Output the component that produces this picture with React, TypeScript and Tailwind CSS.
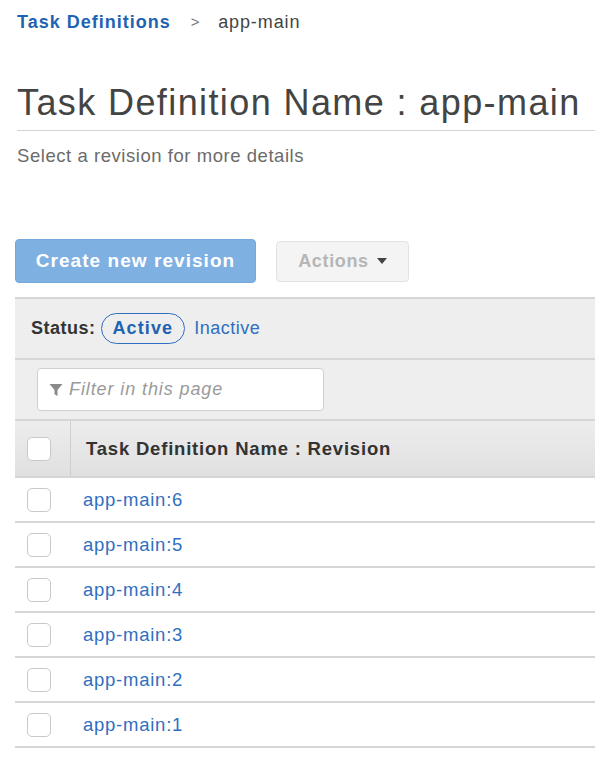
const revisions = [6, 5, 4, 3, 2, 1];

function Checkbox() {
  return <div className="h-[24px] w-[24px] rounded-[5px] border-[1.5px] border-[#c9c9c9] bg-white" />;
}

export default function App() {
  return (
    <div className="min-h-[772px] w-[595px] overflow-hidden bg-white font-['Liberation_Sans',Arial,sans-serif] tracking-[0.65px] text-[#444]">
      <nav className="flex items-center pl-[17px] pt-[10px] text-[18px] leading-[24px]">
        <span className="font-bold tracking-[1px] text-[#1f63b3]">Task Definitions</span>
        <span className="ml-[20px] text-[15px] text-[#777]">&gt;</span>
        <span className="ml-[18px] tracking-[0.9px] text-[#444]">app-main</span>
      </nav>

      <h1 className="ml-[17px] mt-[47px] border-b border-[#d3d3d3] pb-[5px] text-[36px] leading-[44px] font-normal tracking-[1.4px] text-[#444]">
        Task Definition Name : app-main
      </h1>
      <p className="ml-[17px] mt-[13px] text-[18.5px] leading-[24px] tracking-[0.55px] text-[#6b6b6b]">
        Select a revision for more details
      </p>

      <div className="ml-[15px] mt-[71px] flex items-center gap-[20px]">
        <button className="h-[44px] w-[241px] rounded-[4px] border border-[#74a8dd] bg-[#7eb0e2] text-[19px] font-bold tracking-[1.05px] text-white">
          Create new revision
        </button>
        <button className="flex h-[41px] w-[133px] items-center justify-center gap-[8px] rounded-[4px] border border-[#e2e2e2] bg-[#f4f4f4] text-[18px] font-bold text-[#b6b6b6]">
          Actions
          <svg width="10" height="6" viewBox="0 0 10 6">
            <path d="M0 0h10L5 6z" fill="#444" />
          </svg>
        </button>
      </div>

      <div className="ml-[15px] mt-[14px]">
        <div className="flex h-[61px] items-center border-t-2 border-[#d6d6d6] bg-[#eeeeee] pl-[16px] text-[18px]">
          <span className="font-bold tracking-[0.5px] text-[#333]">Status:</span>
          <span className="ml-[5px] flex h-[31px] items-center rounded-full border-[1.5px] border-[#2f6fbf] px-[11px] font-bold tracking-[1.1px] text-[#1f63b3]">
            Active
          </span>
          <span className="ml-[9px] tracking-[0.5px] text-[#2f6fbf]">Inactive</span>
        </div>
        <div className="flex h-[61px] items-center border-t-2 border-[#d6d6d6] bg-[#eeeeee] pl-[22px]">
          <div className="flex h-[43px] w-[287px] items-center gap-[6px] rounded-[4px] border border-[#cfcfcf] bg-white pl-[11px]">
            <svg width="14" height="14" viewBox="0 0 14 14">
              <path d="M0.5 1h13l-5 6v6l-3-1.8V7z" fill="#8a8a8a" />
            </svg>
            <span className="text-[18px] italic tracking-[0.9px] text-[#9a9a9a]">Filter in this page</span>
          </div>
        </div>
        <div className="flex h-[59px] border-y-2 border-[#d6d6d6] bg-gradient-to-b from-[#ededed] to-[#e0e0e0]">
          <div className="flex w-[56px] items-center border-r border-[#cfcfcf] pl-[12px]">
            <Checkbox />
          </div>
          <div className="flex items-center pl-[15px] text-[18.5px] font-bold tracking-[0.8px] text-[#333]">
            Task Definition Name : Revision
          </div>
        </div>
        {revisions.map((r) => (
          <div key={r} className="flex h-[45px] items-center border-b-2 border-[#d6d6d6]">
            <div className="w-[56px] pl-[12px]">
              <Checkbox />
            </div>
            <span className="pl-[12px] text-[18.5px] tracking-[0.75px] text-[#2f6fbf]">app-main:{r}</span>
          </div>
        ))}
      </div>
    </div>
  );
}
